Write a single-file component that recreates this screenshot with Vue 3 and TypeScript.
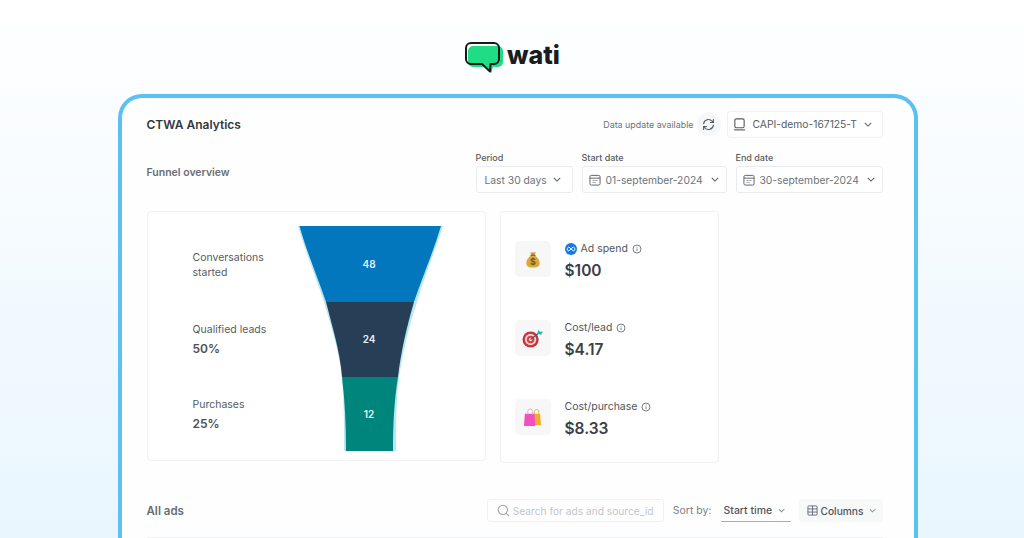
<script setup lang="ts">
const funnelLabels = [
  { name: "Conversations started", value: "" },
  { name: "Qualified leads", value: "50%" },
  { name: "Purchases", value: "25%" },
];
const metrics = [
  { key: "spend", name: "Ad spend", value: "$100", meta: true },
  { key: "lead", name: "Cost/lead", value: "$4.17", meta: false },
  { key: "purchase", name: "Cost/purchase", value: "$8.33", meta: false },
];
</script>

<template>
  <div class="page">
    <div class="logo">
      <svg width="38" height="32" viewBox="0 0 38 32">
        <path d="M8 4h25a5 5 0 0 1 5 5v11a5 5 0 0 1-5 5h-5l-1.500 6-7-6H8a5 5 0 0 1-5-5V9a5 5 0 0 1 5-5z" fill="#1fdc85" />
        <path d="M6 1h23a5 5 0 0 1 5 5v11a5 5 0 0 1-5 5h-3.500l-.5 7.500-8-7.500H6a5 5 0 0 1-5-5V6a5 5 0 0 1 5-5z" fill="none" stroke="#16181a" stroke-width="2" stroke-linejoin="round" />
      </svg>
      <span class="logo-text">wati</span>
    </div>

    <div class="card">
      <div class="top-row">
        <h1 class="title">CTWA Analytics</h1>
        <div class="top-right">
          <span class="update">Data update available</span>
          <button class="refresh">
            <svg width="13" height="13" viewBox="0 0 16 16" fill="none" stroke="#555c63" stroke-width="1.400" stroke-linecap="round" stroke-linejoin="round">
              <path d="M2 7a6 6 0 0 1 10.500-3L14 5.500" />
              <path d="M14 2v3.500h-3.500" />
              <path d="M14 9a6 6 0 0 1-10.500 3L2 10.500" />
              <path d="M2 14v-3.500h3.500" />
            </svg>
          </button>
          <div class="select account">
            <svg width="13" height="13" viewBox="0 0 14 14" fill="none" stroke="#555c63" stroke-width="1.200">
              <rect x="2" y="1" width="10" height="9.500" rx="1.500" />
              <path d="M1 12.800h12" />
            </svg>
            <span>CAPI-demo-167125-T</span>
            <svg class="chev" width="8" height="5" viewBox="0 0 10 6"><path d="M1 1l4 4 4-4" /></svg>
          </div>
        </div>
      </div>

      <div class="filter-row">
        <h2 class="subtitle">Funnel overview</h2>
        <div class="filters">
          <div class="field period">
            <label>Period</label>
            <div class="select">
              <span>Last 30 days</span>
              <svg class="chev" width="8" height="5" viewBox="0 0 10 6"><path d="M1 1l4 4 4-4" /></svg>
            </div>
          </div>
          <div class="field start">
            <label>Start date</label>
            <div class="select">
              <svg class="cal" width="12" height="12" viewBox="0 0 13 13" fill="none" stroke="#555c63" stroke-width="1">
                <rect x="1" y="1.500" width="11" height="10.500" rx="1.500" />
                <path d="M1 4.500h11M4 7h1M6 7h1M8 7h1M4 9.300h1M6 9.300h1" />
              </svg>
              <span>01-september-2024</span>
              <svg class="chev" width="8" height="5" viewBox="0 0 10 6"><path d="M1 1l4 4 4-4" /></svg>
            </div>
          </div>
          <div class="field end">
            <label>End date</label>
            <div class="select">
              <svg class="cal" width="12" height="12" viewBox="0 0 13 13" fill="none" stroke="#555c63" stroke-width="1">
                <rect x="1" y="1.500" width="11" height="10.500" rx="1.500" />
                <path d="M1 4.500h11M4 7h1M6 7h1M8 7h1M4 9.300h1M6 9.300h1" />
              </svg>
              <span>30-september-2024</span>
              <svg class="chev" width="8" height="5" viewBox="0 0 10 6"><path d="M1 1l4 4 4-4" /></svg>
            </div>
          </div>
        </div>
      </div>

      <div class="panels">
        <section class="panel funnel-panel">
          <div class="funnel-labels">
            <div v-for="item in funnelLabels" :key="item.name" class="funnel-label">
              <div class="funnel-name">{{ item.name }}</div>
              <div v-if="item.value" class="funnel-value">{{ item.value }}</div>
            </div>
          </div>
          <svg class="funnel" width="146" height="226" viewBox="0 0 146 226">
            <path d="M0 0C8 27 18 52 26 76C33 100 41 125 44 151C46 176 46 200 46 225H98C98 200 98 176 101 151C105 125 111 100 119 76C126 52 136 27 145 0Z" fill="#b9e6f4" />
            <path d="M1.500 0C9 27 20 52 28 76H116C124 52 135 27 143 0Z" fill="#0377bd" />
            <path d="M28 76C34 100 42 125 44 151H100C103 125 109 100 116 76Z" fill="#263f56" />
            <path d="M44 151C47 176 48 200 48 225H95C95 200 96 176 100 151Z" fill="#00857d" />
            <text x="71" y="42" class="funnel-num">48</text>
            <text x="71" y="117" class="funnel-num">24</text>
            <text x="71" y="192" class="funnel-num">12</text>
          </svg>
        </section>

        <section class="panel metrics-panel">
          <div v-for="metric in metrics" :key="metric.key" class="metric">
            <div class="metric-icon">
              <svg v-if="metric.key === 'spend'" width="16" height="19" viewBox="0 0 18 20">
                <path d="M6 1.500c2 1 4 1 6 0l-1 4H7z" fill="#c99a3a" />
                <path d="M6.500 5.500h5C15 8 17 12 16.500 15c-.4 3-3 4-7.500 4s-7-1-7.500-4C1 12 3 8 6.500 5.500z" fill="#d8a941" />
                <rect x="6.200" y="4.700" width="5.600" height="1.500" rx=".7" fill="#8f6a22" />
                <text x="9" y="16" class="bag-sign">$</text>
              </svg>
              <svg v-else-if="metric.key === 'lead'" width="21" height="19" viewBox="0 0 22 20">
                <circle cx="9" cy="11" r="8.500" fill="#c8323a" />
                <circle cx="9" cy="11" r="6" fill="#f1d3cf" />
                <circle cx="9" cy="11" r="4" fill="#d5414a" />
                <circle cx="9" cy="11" r="1.800" fill="#f4dad6" />
                <path d="M9 11L18 4" stroke="#4a5a63" stroke-width="1.200" />
                <path d="M16 5l1-4 2 2 3-.5-2 3.500z" fill="#28b5b0" />
              </svg>
              <svg v-else width="19" height="19" viewBox="0 0 20 20">
                <path d="M10 6h8l1 12h-9z" fill="#f0ad2e" />
                <path d="M2 6h10l1 13H1z" fill="#f24fc0" />
                <path d="M5 7V3.500a2.500 2.500 0 0 1 5 0V7" fill="none" stroke="#e9a6d6" stroke-width="1" />
                <path d="M12 6V3a2.500 2.500 0 0 1 4.500 0v3" fill="none" stroke="#e3b04f" stroke-width="1" />
              </svg>
            </div>
            <div class="metric-body">
              <div class="metric-name">
                <svg v-if="metric.meta" class="meta" width="12" height="12" viewBox="0 0 12 12">
                  <circle cx="6" cy="6" r="6" fill="#1877e8" />
                  <path d="M3.800 4.200C2.700 4.200 2.300 5.200 2.300 6.200s.5 1.600 1.300 1.600c1.500 0 3-3.600 4.700-3.600 1 0 1.500.9 1.500 2s-.5 1.600-1.300 1.600C7 7.800 5.200 4.200 3.800 4.200z" fill="none" stroke="#fff" stroke-width="1" />
                </svg>
                <span>{{ metric.name }}</span>
                <svg width="10" height="10" viewBox="0 0 10 10" fill="none" stroke="#6b7278" stroke-width=".9">
                  <circle cx="5" cy="5" r="4" />
                  <path d="M5 4.500v2.500M5 2.800v.8" />
                </svg>
              </div>
              <div class="metric-value">{{ metric.value }}</div>
            </div>
          </div>
        </section>
      </div>

      <div class="ads-row">
        <h2 class="subtitle">All ads</h2>
        <div class="ads-tools">
          <div class="search">
            <svg width="13" height="13" viewBox="0 0 14 14" fill="none" stroke="#9a9fa4" stroke-width="1.100">
              <circle cx="6.300" cy="6.300" r="5" />
              <path d="M10 10l3 3" />
            </svg>
            <span>Search for ads and source_id</span>
          </div>
          <span class="sort-label">Sort by:</span>
          <div class="sort">
            <span>Start time</span>
            <svg class="chev" width="7" height="5" viewBox="0 0 10 6"><path d="M1 1l4 4 4-4" /></svg>
          </div>
          <div class="columns">
            <svg width="11" height="11" viewBox="0 0 12 12" fill="none" stroke="#555c63" stroke-width=".9">
              <rect x="1" y="1" width="10" height="10" rx="1" />
              <path d="M6 1v10M1 4.300h10M1 7.700h10" />
            </svg>
            <span>Columns</span>
            <svg class="chev" width="7" height="5" viewBox="0 0 10 6"><path d="M1 1l4 4 4-4" /></svg>
          </div>
        </div>
      </div>
      <div class="divider"></div>
    </div>
  </div>
</template>

<style>
html,
body {
  margin: 0;
  background: #fff;
}
</style>

<style scoped>
.page {
  width: 1024px;
  height: 538px;
  overflow: hidden;
  box-sizing: border-box;
  padding-top: 42px;
  display: flex;
  flex-direction: column;
  align-items: center;
  font-family: Inter, "Liberation Sans", sans-serif;
  color: #2c3136;
  background: linear-gradient(180deg, #fff 0%, #f8fcff 30%, #e9f6fe 100%);
}
.page svg {
  flex: none;
  display: block;
}
.logo {
  display: flex;
  align-items: center;
  gap: 4px;
  height: 32px;
  margin-left: 1px;
}
.logo-text {
  font-size: 25px;
  font-weight: 800;
  color: #1a1c1e;
  line-height: 26px;
  margin-bottom: 6px;
}
.card {
  margin-top: 20px;
  width: 800px;
  flex: 1;
  box-sizing: border-box;
  margin-left: 11px;
  border: 4px solid #5bc0f2;
  border-bottom: none;
  border-radius: 24px 24px 0 0;
  background: #fefefe;
  padding: 12px 31px 0 25px;
}
.top-row {
  display: flex;
  justify-content: space-between;
  align-items: center;
  height: 28px;
}
.title {
  margin: 0;
  font-size: 12px;
  font-weight: 600;
  color: #33383c;
}
.top-right {
  display: flex;
  align-items: center;
}
.update {
  font-size: 8.900px;
  color: #6b7278;
  margin-right: 3px;
}
.refresh {
  width: 24px;
  height: 24px;
  padding: 0;
  border: none;
  border-radius: 50%;
  background: #f6f7f8;
  display: flex;
  align-items: center;
  justify-content: center;
}
.select {
  height: 27px;
  box-sizing: border-box;
  border: 1px solid #e9ebed;
  border-radius: 3px;
  background: #fff;
  display: flex;
  align-items: center;
  font-size: 10.300px;
  color: #6d7378;
  white-space: nowrap;
}
.account {
  width: 156px;
  margin-left: 6px;
  padding-left: 5px;
  gap: 7px;
  color: #565c62;
  border-color: #f0f1f2;
}
.chev {
  fill: none;
  stroke: #5a6066;
  stroke-width: 1.300;
}
.filter-row {
  display: flex;
  justify-content: space-between;
  align-items: center;
  margin-top: 13px;
  height: 42px;
}
.subtitle {
  margin: 0;
  font-size: 10.500px;
  font-weight: 600;
  color: #686e73;
}
.filters {
  display: flex;
  gap: 9px;
}
.field label {
  display: block;
  font-size: 9px;
  line-height: 14px;
  font-weight: 500;
  color: #555b60;
  margin-bottom: 1px;
}
.period {
  width: 97px;
}
.start {
  width: 145px;
}
.end {
  width: 147px;
}
.period .select {
  padding-left: 8px;
  gap: 6px;
}
.start .select,
.end .select {
  padding-left: 6px;
  gap: 5px;
}
.start .chev,
.end .chev {
  margin-left: 3px;
}
.panels {
  display: flex;
  align-items: flex-start;
  gap: 14px;
  margin-top: 18px;
}
.panel {
  border: 1px solid #eff0f2;
  border-radius: 4px;
  box-sizing: border-box;
  background: #fff;
}
.funnel-panel {
  width: 339px;
  height: 250px;
  display: flex;
  padding: 14px 0 0 45px;
}
.funnel-labels {
  width: 105px;
  padding-top: 24px;
}
.funnel-label {
  height: 75px;
  box-sizing: border-box;
}
.funnel-label:first-child {
  height: 70px;
}
.funnel-name {
  font-size: 10.500px;
  line-height: 15px;
  color: #565c62;
  width: 90px;
}
.funnel-label:nth-child(n + 2) {
  padding-top: 2px;
}
.funnel-value {
  font-size: 12px;
  font-weight: 600;
  color: #4c5257;
  margin-top: 4px;
}
.funnel-num {
  font-size: 10px;
  font-weight: 600;
  fill: #e8f1f6;
  text-anchor: middle;
}
.metrics-panel {
  width: 219px;
  height: 252px;
  padding: 29px 0 0 14px;
  display: flex;
  flex-direction: column;
  gap: 43px;
}
.metric {
  display: flex;
  align-items: center;
  gap: 14px;
  height: 36px;
}
.metric-icon {
  width: 36px;
  height: 36px;
  border-radius: 5px;
  background: #f7f7f8;
  display: flex;
  align-items: center;
  justify-content: center;
  flex: none;
}
.bag-sign {
  font-size: 10px;
  font-weight: 700;
  fill: #7a5a1c;
  text-anchor: middle;
}
.metric-body {
  padding-top: 4px;
}
.metric-name {
  display: flex;
  align-items: center;
  gap: 4px;
  font-size: 10.500px;
  color: #50565b;
  line-height: 14px;
}
.metric-value {
  font-size: 15.500px;
  font-weight: 600;
  color: #3b4045;
  margin-top: 6px;
  line-height: 18px;
}
.ads-row {
  display: flex;
  justify-content: space-between;
  align-items: center;
  margin-top: 36px;
  height: 23px;
}
.ads-row .subtitle {
  font-size: 11.500px;
}
.ads-tools {
  display: flex;
  align-items: center;
  height: 23px;
}
.search {
  width: 177px;
  height: 23px;
  box-sizing: border-box;
  border: 1px solid #f0f1f2;
  border-radius: 3px;
  display: flex;
  align-items: center;
  gap: 3px;
  padding-left: 9px;
  font-size: 10.200px;
  color: #c3c6c9;
  white-space: nowrap;
}
.sort-label {
  margin-left: 9px;
  font-size: 10.500px;
  color: #7a8085;
}
.sort {
  margin-left: 9px;
  width: 70px;
  height: 23px;
  box-sizing: border-box;
  border-bottom: 1px solid #a9adb1;
  padding-left: 3px;
  display: flex;
  align-items: center;
  gap: 6px;
  font-size: 10.500px;
  font-weight: 500;
  color: #50565b;
}
.columns {
  margin-left: 8px;
  width: 84px;
  height: 23px;
  box-sizing: border-box;
  background: #f7f8f8;
  border-radius: 3px;
  display: flex;
  align-items: center;
  gap: 3px;
  padding-left: 8px;
  font-size: 10.200px;
  font-weight: 500;
  color: #50565b;
}
.columns .chev {
  margin-left: 3px;
}
.divider {
  margin-top: 15px;
  height: 1px;
  background: #eff0f2;
}
</style>
